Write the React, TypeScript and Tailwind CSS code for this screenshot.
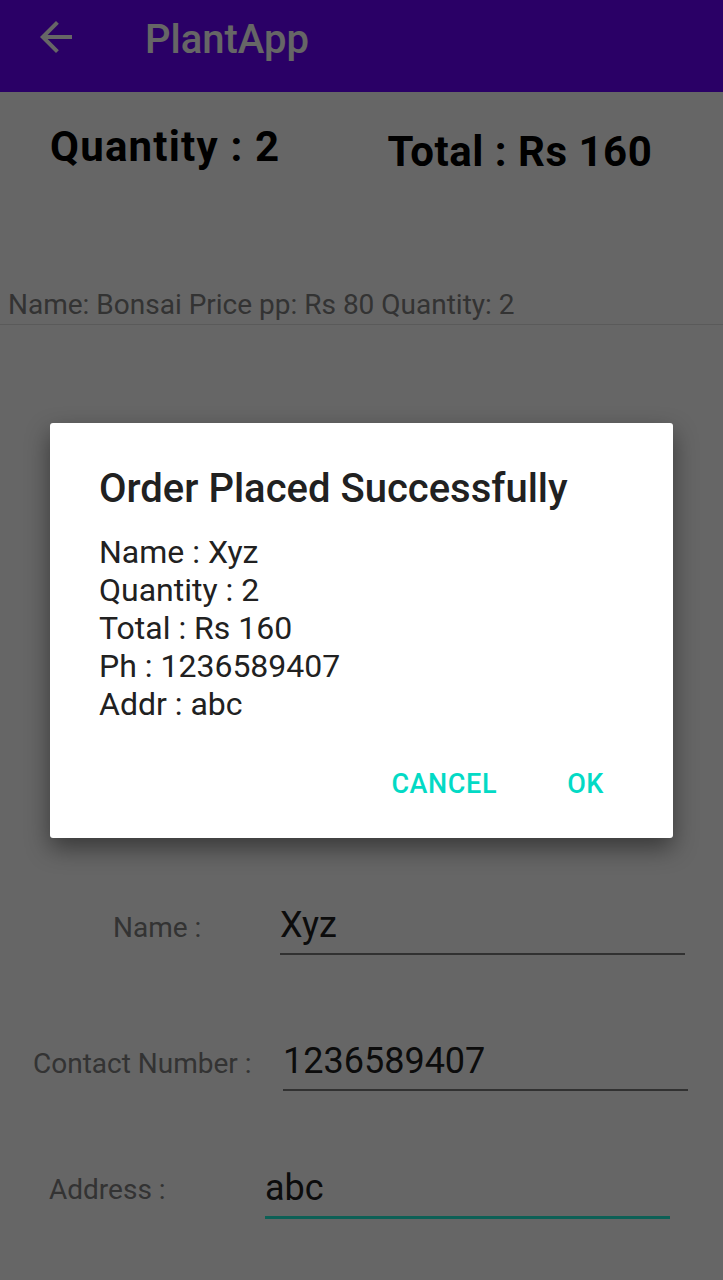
import React from "react";

const font = { fontFamily: "Roboto, 'Noto Sans', sans-serif" };

const details = ["Name : Xyz", "Quantity : 2", "Total : Rs 160", "Ph : 1236589407", "Addr : abc"];

const FormRow: React.FC<{ label: string; value: string; labelBox: string; field: string; line: string; rowClass: string }> = ({
  label,
  value,
  labelBox,
  field,
  line,
  rowClass,
}) => (
  <div className={`flex items-end ${rowClass}`}>
    <div className={`text-[28px] text-[#808080] ${labelBox}`}>{label}</div>
    <div className={field}>
      <div className="text-[36px] leading-[44px] text-[#202020]">{value}</div>
      <div className={line} />
    </div>
  </div>
);

const App: React.FC = () => {
  return (
    <div className="relative w-[723px] h-[1280px] overflow-hidden bg-white" style={font}>
      {/* app bar */}
      <div className="flex items-start h-[92px] bg-[#6a00ff]">
        <svg viewBox="0 0 24 24" className="w-[48px] h-[48px] ml-[32px] mt-[13px]" fill="#ffffff">
          <path d="M20 11H7.83l5.59-5.59L12 4l-8 8 8 8 1.41-1.41L7.83 13H20v-2z" />
        </svg>
        <div className="ml-[65px] mt-[20px] text-[40px] font-medium text-white leading-none">PlantApp</div>
      </div>

      {/* summary */}
      <div className="flex items-start font-bold text-black text-[42px] leading-none pt-[34px]">
        <div className="ml-[50px] tracking-[1.2px]">Quantity : 2</div>
        <div className="ml-[107px] mt-[5px] tracking-[0.5px]">Total : Rs 160</div>
      </div>

      {/* cart item */}
      <div className="mt-[115px] pl-[8px] text-[28px] text-[#808080] leading-[34px]">
        Name: Bonsai Price pp: Rs 80 Quantity: 2
      </div>
      <div className="mt-[2px] h-px bg-[#e0e0e0]" />

      {/* form */}
      <div className="flex flex-col mt-[578px]">
        <FormRow
          label="Name :"
          value="Xyz"
          rowClass=""
          labelBox="pl-[113px] w-[280px] pb-[6px]"
          field="w-[405px]"
          line="mt-[6px] h-[2px] bg-[#7a7a7a]"
        />
        <FormRow
          label="Contact Number :"
          value="1236589407"
          rowClass="mt-[84px]"
          labelBox="pl-[33px] w-[283px] pb-[6px]"
          field="w-[405px]"
          line="mt-[6px] h-[2px] bg-[#7a7a7a]"
        />
        <FormRow
          label="Address :"
          value="abc"
          rowClass="mt-[75px]"
          labelBox="pl-[49px] w-[265px] pb-[8px]"
          field="w-[405px]"
          line="mt-[6px] h-[3px] bg-[#22f0d8]"
        />
      </div>

      {/* dim overlay */}
      <div className="absolute inset-0 bg-black/60" />

      {/* dialog */}
      <div className="absolute left-[50px] top-[423px] w-[623px] h-[415px] bg-white rounded-[3px] shadow-[0_10px_24px_rgba(0,0,0,0.45)] px-[49px] pt-[41px]">
        <div className="text-[40px] font-medium text-[#212121] leading-[50px]">Order Placed Successfully</div>
        <div className="mt-[19px] text-[32px] text-[#212121] leading-[38px]">
          {details.map((d) => (
            <div key={d}>{d}</div>
          ))}
        </div>
        <div className="flex justify-end gap-[70px] mt-[41px] pr-[20px] text-[27px] font-medium text-[#03dac5] tracking-[0.6px]">
          <span>CANCEL</span>
          <span>OK</span>
        </div>
      </div>
    </div>
  );
};

export default App;
